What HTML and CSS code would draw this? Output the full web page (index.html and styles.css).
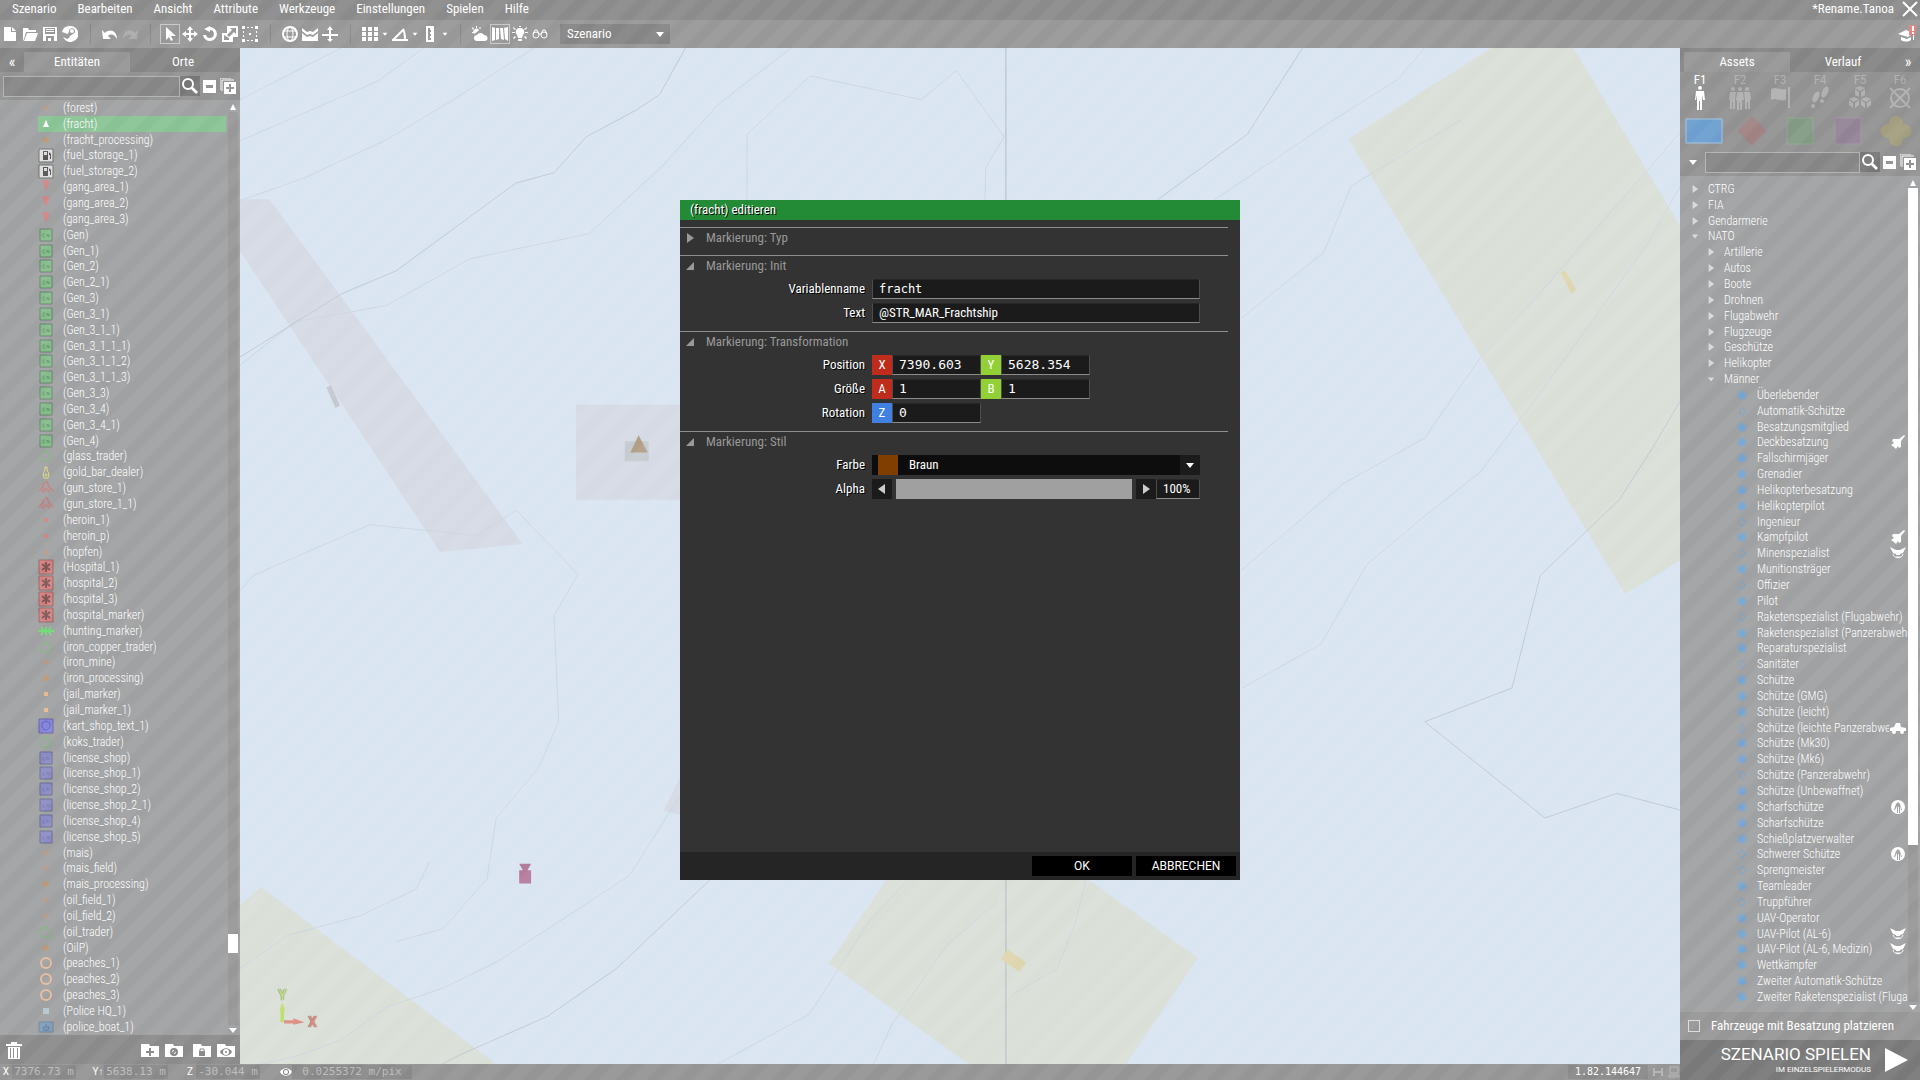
FILE: index.html
```
<!DOCTYPE html>
<html lang="de">
<head>
  <meta charset="UTF-8">
  <title>*Rename.Tanoa</title>
  <link rel="stylesheet" href="styles.css">
</head>
<body>
  <!-- shared icons -->
  <svg class="defs" aria-hidden="true">
    <symbol id="new" viewBox="0 0 16 16"><path d="M2 1h7v5h5v9H2zM10 1l4 4h-4z"/></symbol>
    <symbol id="open" viewBox="0 0 16 16"><path d="M1 15V2h5l1 2h7v2H4L2 13zM5 7h11l-3 8H2z"/></symbol>
    <symbol id="save" viewBox="0 0 16 16"><path fill-rule="evenodd" d="M1 1h14v14H1zM3 2v6h10V2zM4 10v5h2v-3h3v3h3v-5z"/><path d="M4 3h8v1H4zM4 5h8v1H4z"/></symbol>
    <symbol id="steam" viewBox="0 0 16 16"><path fill-rule="evenodd" d="M8 0a8 8 0 1 1-7 11l4 2 2-1 1-2 3-2a3 3 0 1 0-4-3L6 8 0 6a8 8 0 0 1 8-6zM10 3a2 2 0 1 1 0 4 2 2 0 0 1 0-4z"/></symbol>
    <symbol id="undo" viewBox="0 0 16 16"><path d="M0 4l1 9h8L6 10c3-3 7-1 9 3C15 5 8 2 3 7z"/></symbol>
    <symbol id="redo" viewBox="0 0 16 16"><path d="M16 4l-1 9H7l3-3C7 7 3 9 1 13 1 5 8 2 13 7z"/></symbol>
    <symbol id="cursor" viewBox="0 0 16 16"><path d="M4 1l10 9H9l2 4-2 1-2-4-3 3z"/></symbol>
    <symbol id="move" viewBox="0 0 16 16"><path d="M8 0l3 4H9v3h3V5l4 3-4 3V9H9v3h2l-3 4-3-4h2V9H4v2L0 8l4-3v2h3V4H5z"/></symbol>
    <symbol id="rotate" viewBox="0 0 16 16"><path d="M8 1a7 7 0 1 1-7 8h3a4 4 0 1 0 4-5v2L2 3l6-3z"/></symbol>
    <symbol id="scale" viewBox="0 0 16 16"><path fill-rule="evenodd" d="M5 0h11v11h-5v5H0V7h5zM8 2l2 2-5 5 2 2 5-5 2 2V2zM2 9v5h5v-2z"/></symbol>
    <symbol id="area" viewBox="0 0 16 16"><path d="M0 0h3v3H0zM13 0h3v3h-3zM0 13h3v3H0zM13 13h3v3h-3zM5 1h2v1H5zM9 1h2v1H9zM5 14h2v1H5zM9 14h2v1H9zM1 5h1v2H1zM1 9h1v2H1zM14 5h1v2h-1zM14 9h1v2h-1zM7 7h2v2H7z"/></symbol>
    <symbol id="globe" viewBox="0 0 16 16"><g fill="none" stroke="currentColor"><circle cx="8" cy="8" r="7" stroke-width="2"/><ellipse cx="8" cy="8" rx="3" ry="7"/><path d="M2 5h12M2 11h12"/></g></symbol>
    <symbol id="surface" viewBox="0 0 16 16"><path d="M0 2l5 4 3-1 3 1 5-4v3l-5 4-3-1-3 1-5-4zM0 7l5 4 3-1 3 1 5-4v8H0z"/></symbol>
    <symbol id="vertical" viewBox="0 0 16 16"><path d="M8 0l3 4H9v4h7v2H9v3h2l-3 3-3-3h2v-3H0V8h7V4H5z"/></symbol>
    <symbol id="grid" viewBox="0 0 16 16"><path d="M0 1h4v4H0zM6 1h4v4H6zM12 1h4v4h-4zM0 6h4v4H0zM6 6h4v4H6zM12 6h4v4h-4zM0 11h4v4H0zM6 11h4v4H6zM12 11h4v4h-4z"/></symbol>
    <symbol id="angle" viewBox="0 0 16 16"><path d="M1 14L12 3M0 14h16M11 4c2 2 2 6 2 10" fill="none" stroke="currentColor" stroke-width="2"/></symbol>
    <symbol id="ruler" viewBox="0 0 16 16"><path d="M5 1h6v14H5zM8 3h3M9 5h2M8 7h3M9 9h2M8 11h3M9 13h2" fill="none" stroke="currentColor" stroke-width="2"/></symbol>
    <symbol id="weather" viewBox="0 0 16 16"><path d="M5 15a3 3 0 0 1 0-6 4 4 0 0 1 7 0 3 3 0 0 1 1 6zM2 8a3 3 0 0 1 5-4l-2 2zM4 0h1v2H4zM0 2l1-1 1 2-1 1zM0 6h1v1H0zM8 1l1 1-1 1-1-1z"/></symbol>
    <symbol id="texture" viewBox="0 0 16 16"><path d="M0 1l3 1v12l-3 1zM4 2h3v11l-3 1zM8 2h3l1 12-3-1zM12 2l4-1v14l-3-2z"/></symbol>
    <symbol id="bulb" viewBox="0 0 16 16"><path d="M8 2a4 4 0 0 1 3 7l-1 3H6L5 9a4 4 0 0 1 3-7zM6 13h4v2H6zM0 6h3v1H0zM13 6h3v1h-3zM7 0h2v1H7zM1 12l2-2 1 1-2 2zM12 11l1-1 2 2-1 1zM1 1l3 2-1 1-2-2zM15 1l-3 2 1 1 2-2z"/></symbol>
    <symbol id="binoc" viewBox="0 0 16 16"><g fill="none" stroke="currentColor"><circle cx="4" cy="9" r="3"/><circle cx="12" cy="9" r="3"/><path d="M1 8l2-4h2l2 4h2l2-4h2l2 4"/></g></symbol>
    <symbol id="search" viewBox="0 0 16 16"><circle cx="6" cy="6" r="5" fill="none" stroke="currentColor" stroke-width="2"/><path d="M9 11l2-2 5 5-2 2z"/></symbol>
    <symbol id="minus" viewBox="0 0 16 16"><path fill-rule="evenodd" d="M1 2h13v13H1zM4 7v3h7V7z"/></symbol>
    <symbol id="plus" viewBox="0 0 16 16"><path fill-rule="evenodd" d="M4 4h12v12H4zM9 6v3H6v2h3v3h2v-3h3V9h-3V6z"/><path d="M2 13V2h12M0 12V0h11" fill="none" stroke="currentColor"/></symbol>
    <symbol id="up" viewBox="0 0 10 10"><path d="M5 2l3 6H2z"/></symbol>
    <symbol id="down" viewBox="0 0 10 10"><path d="M1 3h8L5 8z"/></symbol>
    <symbol id="left" viewBox="0 0 10 10"><path d="M8 0v10L1 5z"/></symbol>
    <symbol id="right" viewBox="0 0 10 10"><path d="M2 0v10l7-5z"/></symbol>
    <symbol id="corner" viewBox="0 0 10 10"><path d="M9 1v8H1z"/></symbol>
    <symbol id="close" viewBox="0 0 16 16"><path d="M1 1l14 14M15 1L1 15" stroke="currentColor" stroke-width="2"/></symbol>
    <symbol id="tutor" viewBox="0 0 18 18"><path d="M0 9l8-4 7 3-5 4zM3 12l6 2 4-2v3c-3 2-7 2-10 0zM15 9h1v6h-1z"/><path fill="#e08282" d="M11 0h7v10h-7z"/><path d="M14 1h2v5h-2zM14 7h2v2h-2z"/></symbol>
    <symbol id="trash" viewBox="0 0 16 18"><path fill-rule="evenodd" d="M0 3h5V1h6v2h5v2H0zM2 6h12v12H2zM4 7v10h1V7zM7 7v10h1V7zM11 7v10h1V7z"/></symbol>
    <symbol id="f-add" viewBox="0 0 18 16"><path fill-rule="evenodd" d="M0 2h8l1 2h9v11H0zM8 6v3H5v2h3v3h2v-3h3V9h-3V6z"/></symbol>
    <symbol id="f-off" viewBox="0 0 18 16"><path d="M0 2h8l1 2h9v11H0z"/><g fill="none" stroke="#858585" stroke-width="2"><circle cx="9" cy="10" r="3"/><path d="M7 12l4-4"/></g></symbol>
    <symbol id="f-lock" viewBox="0 0 18 16"><path d="M0 2h8l1 2h9v11H0z"/><path fill="#858585" d="M6 9h6v5H6z"/><path d="M7 9V7h4v2" fill="none" stroke="#858585"/></symbol>
    <symbol id="f-eye" viewBox="0 0 18 16"><path d="M0 2h8l1 2h9v11H0z"/><path fill="#858585" d="M3 10c3-5 9-5 12 0-3 5-9 5-12 0z"/><circle cx="9" cy="10" r="3"/><circle cx="9" cy="10" r="1" fill="#858585"/></symbol>
    <symbol id="eye" viewBox="0 0 12 12"><path d="M0 6c3-5 9-5 12 0-3 5-9 5-12 0z"/><circle cx="6" cy="6" r="3" fill="#858585"/><circle cx="6" cy="6" r="2"/></symbol>
    <symbol id="man" viewBox="0 0 24 24"><path d="M12 0a2 2 0 1 1 0 4 2 2 0 0 1 0-4zM8 5h8l1 9h-2l-1-5v15h-2v-9h-1v9H9V9l-1 5H7z"/></symbol>
    <symbol id="group" viewBox="0 0 24 24"><path d="M12 1a2 2 0 1 1 0 4 2 2 0 0 1 0-4zM9 6h6l1 8h-2v10h-2v-8h-1v8H9V14H8zM5 1a2 2 0 1 1 0 4 2 2 0 0 1 0-4zM2 6h6l-1 8v9H5v-7H4v7H2v-9H1zM19 1a2 2 0 1 1 0 4 2 2 0 0 1 0-4zM16 6h6l1 8h-1v9h-2v-7h-1v7h-2v-9z"/></symbol>
    <symbol id="flag" viewBox="0 0 24 24"><path d="M3 3c5-3 9 2 15 0v11c-6 2-10-3-15 0zM20 1h2v21h-2z"/></symbol>
    <symbol id="steps" viewBox="0 0 24 24"><ellipse cx="17" cy="6" rx="3" ry="6" transform="rotate(25 17 6)"/><ellipse cx="14" cy="15" rx="2" ry="2"/><ellipse cx="8" cy="11" rx="3" ry="6" transform="rotate(25 8 11)"/><ellipse cx="5" cy="20" rx="2" ry="2"/></symbol>
    <symbol id="cubes" viewBox="0 0 24 24"><path d="M12 0l5 2-5 3-5-3zM7 3l4 3v5L7 9zM17 3l-4 3v5l4-2zM6 11l5 2-5 3-5-3zM1 14l4 3v5l-4-3zM11 14l-4 3v5l4-3zM18 11l5 2-5 3-5-3zM13 14l4 3v5l-4-3zM23 14l-4 3v5l4-3z"/></symbol>
    <symbol id="empty" viewBox="0 0 24 24"><g fill="none" stroke="currentColor" stroke-width="2"><circle cx="12" cy="12" r="9"/><path d="M2 2l20 20M22 2L2 22"/></g></symbol>
    <symbol id="play" viewBox="0 0 24 24"><path d="M1 0v24l23-12z"/></symbol>
    <symbol id="jet" viewBox="0 0 16 16"><path d="M14 1l1 1-4 5v6l-2 1-1-2-2 3-2-2-3-2 3-2-2-2 1-2h6z"/></symbol>
    <symbol id="bird" viewBox="0 0 16 16"><path d="M0 2l6 3h4l6-3-3 6-3 1v1H6V9L3 8z"/><path d="M3 9c1 5 9 5 10 0M6 12h4" fill="none" stroke="currentColor"/></symbol>
    <symbol id="car" viewBox="0 0 16 16"><path d="M0 8l4-1 2-4h4l1 4 5 1v3H0z"/><circle cx="4" cy="12" r="2"/><circle cx="12" cy="12" r="2"/></symbol>
    <symbol id="dlc" viewBox="0 0 16 16"><path fill-rule="evenodd" d="M8 1a7 7 0 1 1 0 14A7 7 0 0 1 8 1zM8 3L6 5l-2 6h1l2-4v7h1V8h1v6h1V7l1 4h1l-2-6z"/></symbol>

    <!-- marker icons -->
    <symbol id="m-tri" viewBox="0 0 16 16"><path fill="#fff" d="M8 4l3 7H5z"/></symbol>
    <symbol id="m-brown" viewBox="0 0 16 16"><path fill="#b99b84" d="M8 4l3 6H5z"/></symbol>
    <symbol id="m-proc" viewBox="0 0 16 16"><path fill="#bb9777" d="M8 5l3 2v3l-2 1H6L5 9V6z"/></symbol>
    <symbol id="m-fuel" viewBox="0 0 16 16"><path fill="#dedede" stroke="#6e6e6e" d="M1 2h14v13H1z"/><path fill="#555" fill-rule="evenodd" d="M5 4h5v9H5zM6 5v3h3V5zM11 5l2 2v5h-1V8h-1z"/></symbol>
    <symbol id="m-gang" viewBox="0 0 16 16"><path fill="#cf8686" d="M5 1h6v5L9 8v3H7V8L5 6z"/></symbol>
    <symbol id="m-gen" viewBox="0 0 16 16"><path fill="#85bd8c" stroke="#6b806d" d="M2 2h12v12H2z"/><path fill="none" stroke="#669b6c" d="M7 7H5v3h2M9 10V7l2 3V7"/></symbol>
    <symbol id="m-trader" viewBox="0 0 16 16"><path fill="none" stroke="#86b087" stroke-width="2" stroke-dasharray="2 1" d="M8 2v3M5 4L2 8l2 5h8l2-5-3-4z"/></symbol>
    <symbol id="m-gold" viewBox="0 0 16 16"><path fill="none" stroke="#e3dd83" d="M7 3h2v3l2 4-1 4H6l-1-4 2-4z"/><circle cx="8" cy="11" r="1" fill="none" stroke="#e3dd83"/></symbol>
    <symbol id="m-gun" viewBox="0 0 16 16"><path fill="none" stroke="#bd8484" stroke-width="2" d="M7 2h2l2 5 4 4M6 3L5 7l-4 4M5 13c0-5 6-5 6 0"/></symbol>
    <symbol id="m-red" viewBox="0 0 16 16"><circle cx="8" cy="8" r="2" fill="#dc7f7f"/></symbol>
    <symbol id="m-hosp" viewBox="0 0 16 16"><path fill="#d68080" stroke="#8c6a6a" d="M1 1h14v14H1z"/><path stroke="#7d5656" stroke-width="2" d="M8 3v10M4 5l8 6M12 5l-8 6"/></symbol>
    <symbol id="m-hunt" viewBox="0 0 16 16"><path fill="none" stroke="#73dd79" stroke-width="2" d="M0 8h16M8 4v8M3 4l3 4-3 4M13 4l-3 4 3 4"/></symbol>
    <symbol id="m-jail" viewBox="0 0 16 16"><path fill="#e9b98c" d="M6 6h4v4H6z"/></symbol>
    <symbol id="m-kart" viewBox="0 0 16 16"><path fill="#8585dd" stroke="#6767a0" d="M1 1h14v14H1z"/><path fill="none" stroke="#6565bb" d="M8 3l4 2v4l-3 3H7L4 9V5z"/></symbol>
    <symbol id="m-lic" viewBox="0 0 16 16"><path fill="#8c8cc4" stroke="#6c6c93" d="M2 2h12v12H2z"/><path fill="none" stroke="#7c7cb2" d="M5 7v3h2M9 10V7l2 3V7"/></symbol>
    <symbol id="m-ring" viewBox="0 0 16 16"><circle cx="8" cy="8" r="5" fill="none" stroke="#e6bd9f" stroke-width="2"/></symbol>
    <symbol id="m-hq" viewBox="0 0 16 16"><path fill="#b7c6cf" d="M5 5h6v6H5z"/></symbol>
    <symbol id="m-boat" viewBox="0 0 16 16"><path fill="#819db8" stroke="#708599" d="M1 3h14v10H1z"/><path fill="none" stroke="#5c7fa2" d="M5 8h6l-1 3H6zM7 6h2"/></symbol>
    <symbol id="m-unit" viewBox="0 0 16 16"><circle cx="8" cy="8" r="5" fill="#74a5d2" opacity=".5"/><path fill="#6fa5d8" d="M8 5l3 3-1 3H6L5 8z"/></symbol>
    <symbol id="m-open" viewBox="0 0 16 16"><path fill="none" stroke="#76a3cc" d="M8 4l3 4-2 4H7L5 8z"/></symbol>
  </svg>

  <div class="editor">
    <header class="topbar">
      <nav class="menu">
        <button>Szenario</button><button>Bearbeiten</button><button>Ansicht</button><button>Attribute</button><button>Werkzeuge</button><button>Einstellungen</button><button>Spielen</button><button>Hilfe</button>
        <span class="mission">*Rename.Tanoa</span>
        <button class="close" aria-label="Schließen"><svg><use href="#close"/></svg></button>
      </nav>
      <div class="toolbar">
        <button aria-label="Neu"><svg><use href="#new"/></svg></button>
        <button aria-label="Öffnen"><svg><use href="#open"/></svg></button>
        <button aria-label="Speichern"><svg><use href="#save"/></svg></button>
        <button aria-label="Steam"><svg><use href="#steam"/></svg></button>
        <span class="sep"></span>
        <button aria-label="Rückgängig"><svg><use href="#undo"/></svg></button>
        <button aria-label="Wiederholen" disabled><svg><use href="#redo"/></svg></button>
        <span class="sep"></span>
        <button class="on" aria-label="Auswählen"><svg><use href="#cursor"/></svg></button>
        <button aria-label="Verschieben"><svg><use href="#move"/></svg></button>
        <button aria-label="Drehen"><svg><use href="#rotate"/></svg></button>
        <button aria-label="Skalieren"><svg><use href="#scale"/></svg></button>
        <button aria-label="Bereich"><svg><use href="#area"/></svg></button>
        <span class="sep"></span>
        <button aria-label="Koordinatenraum"><svg><use href="#globe"/></svg></button>
        <button aria-label="Oberfläche"><svg><use href="#surface"/></svg></button>
        <button aria-label="Vertikal"><svg><use href="#vertical"/></svg></button>
        <span class="sep"></span>
        <button aria-label="Raster"><svg><use href="#grid"/></svg></button>
        <button class="caret" aria-label="Rasterweite"><svg><use href="#down"/></svg></button>
        <button aria-label="Winkel"><svg><use href="#angle"/></svg></button>
        <button class="caret" aria-label="Winkelschritt"><svg><use href="#down"/></svg></button>
        <button aria-label="Größe"><svg><use href="#ruler"/></svg></button>
        <button class="caret" aria-label="Größenschritt"><svg><use href="#down"/></svg></button>
        <span class="sep"></span>
        <button aria-label="Wetter"><svg><use href="#weather"/></svg></button>
        <button class="on" aria-label="Texturen"><svg><use href="#texture"/></svg></button>
        <button aria-label="Licht"><svg><use href="#bulb"/></svg></button>
        <button aria-label="Sicht"><svg><use href="#binoc"/></svg></button>
        <div class="phase">
          <select aria-label="Phase"><option>Szenario</option></select>
          <svg><use href="#down"/></svg>
        </div>
        <button class="tutor" aria-label="Tutorials"><svg><use href="#tutor"/></svg></button>
      </div>
    </header>

    <aside class="panel left">
      <div class="tabs">
        <button class="fold">«</button><button class="tab active">Entitäten</button><button class="tab">Orte</button>
      </div>
      <div class="search">
        <input type="text" aria-label="Suche">
        <button class="find" aria-label="Suchen"><svg><use href="#search"/></svg></button>
        <button aria-label="Zuklappen"><svg><use href="#minus"/></svg></button>
        <button aria-label="Aufklappen"><svg><use href="#plus"/></svg></button>
      </div>
      <div class="scroller">
        <ul class="entities">
          <li><svg><use href="#m-brown"/></svg>(forest)</li>
          <li class="selected"><svg><use href="#m-tri"/></svg>(fracht)</li>
          <li><svg><use href="#m-proc"/></svg>(fracht_processing)</li>
          <li><svg><use href="#m-fuel"/></svg>(fuel_storage_1)</li>
          <li><svg><use href="#m-fuel"/></svg>(fuel_storage_2)</li>
          <li><svg><use href="#m-gang"/></svg>(gang_area_1)</li>
          <li><svg><use href="#m-gang"/></svg>(gang_area_2)</li>
          <li><svg><use href="#m-gang"/></svg>(gang_area_3)</li>
          <li><svg><use href="#m-gen"/></svg>(Gen)</li>
          <li><svg><use href="#m-gen"/></svg>(Gen_1)</li>
          <li><svg><use href="#m-gen"/></svg>(Gen_2)</li>
          <li><svg><use href="#m-gen"/></svg>(Gen_2_1)</li>
          <li><svg><use href="#m-gen"/></svg>(Gen_3)</li>
          <li><svg><use href="#m-gen"/></svg>(Gen_3_1)</li>
          <li><svg><use href="#m-gen"/></svg>(Gen_3_1_1)</li>
          <li><svg><use href="#m-gen"/></svg>(Gen_3_1_1_1)</li>
          <li><svg><use href="#m-gen"/></svg>(Gen_3_1_1_2)</li>
          <li><svg><use href="#m-gen"/></svg>(Gen_3_1_1_3)</li>
          <li><svg><use href="#m-gen"/></svg>(Gen_3_3)</li>
          <li><svg><use href="#m-gen"/></svg>(Gen_3_4)</li>
          <li><svg><use href="#m-gen"/></svg>(Gen_3_4_1)</li>
          <li><svg><use href="#m-gen"/></svg>(Gen_4)</li>
          <li><svg><use href="#m-trader"/></svg>(glass_trader)</li>
          <li><svg><use href="#m-gold"/></svg>(gold_bar_dealer)</li>
          <li><svg><use href="#m-gun"/></svg>(gun_store_1)</li>
          <li><svg><use href="#m-gun"/></svg>(gun_store_1_1)</li>
          <li><svg><use href="#m-red"/></svg>(heroin_1)</li>
          <li><svg><use href="#m-red"/></svg>(heroin_p)</li>
          <li><svg><use href="#m-brown"/></svg>(hopfen)</li>
          <li><svg><use href="#m-hosp"/></svg>(Hospital_1)</li>
          <li><svg><use href="#m-hosp"/></svg>(hospital_2)</li>
          <li><svg><use href="#m-hosp"/></svg>(hospital_3)</li>
          <li><svg><use href="#m-hosp"/></svg>(hospital_marker)</li>
          <li><svg><use href="#m-hunt"/></svg>(hunting_marker)</li>
          <li><svg><use href="#m-trader"/></svg>(iron_copper_trader)</li>
          <li><svg><use href="#m-brown"/></svg>(iron_mine)</li>
          <li><svg><use href="#m-proc"/></svg>(iron_processing)</li>
          <li><svg><use href="#m-jail"/></svg>(jail_marker)</li>
          <li><svg><use href="#m-jail"/></svg>(jail_marker_1)</li>
          <li><svg><use href="#m-kart"/></svg>(kart_shop_text_1)</li>
          <li><svg><use href="#m-trader"/></svg>(koks_trader)</li>
          <li><svg><use href="#m-lic"/></svg>(license_shop)</li>
          <li><svg><use href="#m-lic"/></svg>(license_shop_1)</li>
          <li><svg><use href="#m-lic"/></svg>(license_shop_2)</li>
          <li><svg><use href="#m-lic"/></svg>(license_shop_2_1)</li>
          <li><svg><use href="#m-lic"/></svg>(license_shop_4)</li>
          <li><svg><use href="#m-lic"/></svg>(license_shop_5)</li>
          <li><svg><use href="#m-brown"/></svg>(mais)</li>
          <li><svg><use href="#m-brown"/></svg>(mais_field)</li>
          <li><svg><use href="#m-proc"/></svg>(mais_processing)</li>
          <li><svg><use href="#m-brown"/></svg>(oil_field_1)</li>
          <li><svg><use href="#m-brown"/></svg>(oil_field_2)</li>
          <li><svg><use href="#m-trader"/></svg>(oil_trader)</li>
          <li><svg><use href="#m-proc"/></svg>(OilP)</li>
          <li><svg><use href="#m-ring"/></svg>(peaches_1)</li>
          <li><svg><use href="#m-ring"/></svg>(peaches_2)</li>
          <li><svg><use href="#m-ring"/></svg>(peaches_3)</li>
          <li><svg><use href="#m-hq"/></svg>(Police HQ_1)</li>
          <li><svg><use href="#m-boat"/></svg>(police_boat_1)</li>
        </ul>
        <div class="scrollbar"><svg><use href="#up"/></svg><div class="track"><div class="thumb"></div></div><svg><use href="#down"/></svg></div>
      </div>
      <div class="actions">
        <button class="trash" aria-label="Löschen"><svg><use href="#trash"/></svg></button>
        <button aria-label="Ordner hinzufügen"><svg><use href="#f-add"/></svg></button>
        <button aria-label="Ordner auflösen"><svg><use href="#f-off"/></svg></button>
        <button class="lock" aria-label="Sperren"><svg><use href="#f-lock"/></svg></button>
        <button aria-label="Sichtbarkeit"><svg><use href="#f-eye"/></svg></button>
      </div>
    </aside>

    <main class="map">
      <svg viewBox="0 12 1568 1532" preserveAspectRatio="none">
        <g class="zone">
          <path d="M1207 149L1362 12h90l116 268v505l-60 50z"/>
          <path d="M0 1305l23-28 256 267H0z"/>
          <path d="M641 1392l65-130h214l123 122-78 160H793z"/>
        </g>
        <g class="road">
          <path d="M0 240h32l276 520-90 12L0 318zM366 550h120v143H366zM479 1112v56l-18-6z"/>
        </g>
        <g class="minor">
          <path d="M200 12L150 62 0 152M320 12L230 92 160 150 70 208 0 242M600 12L520 98 460 190 380 292 250 330 160 400 60 425 0 490"/>
          <path d="M552 240v-98l69-88 121 36 38-44 52 100-20 46-1 70M0 830l15-23 126-76 117 16 43-38 67 97-26 62 5 160-22 70-46 75-10 92-48 75-52 20"/>
          <path d="M479 1140l-55 120-144 130-60 40-60 28-50 50-50 25-60 18M0 1400l52-50 80-30 60-40 14-40M520 1544l100-75 65-140 40-60M690 1544l20-60 60-120 55-65M840 1440l50-40 20-70 12-70"/>
          <path d="M1060 242L1180 130 1260 60 1290 12M1090 800l110-130 90-70 60-120 60-90 158-250M1090 978l87-67 50-120 60-70 64-70 60-110 120-230 37-90"/>
          <path d="M110 12L0 90M1090 420l90-100 30-100 120-100"/>
        </g>
        <g class="major">
          <path d="M485 12l-28 70-26 24-54 40-35 54-42 16-130 132-60 35L0 478M1157 12l-60 130-97 98M1568 545l-30 70-36 78-86 114-31 170-95 51 131 145 78-37 69 25M515 1262L410 1400 335 1472 240 1530 220 1544"/>
        </g>
        <path class="meridian" d="M834 12v1532"/>
        <path fill="#ddd6af" d="M836 1371l20 20-7 14-21-19zM1438 350l5-2 12 29-5 5z"/>
        <path fill="#c5c8cf" d="M94 524l5-3 10 30-5 4z"/>
        <path fill="#c5cbd0" d="M419 605h26v30h-26z"/>
        <path fill="#b39f88" d="M434 596l10 26h-19z"/>
        <path fill="#b57b9b" d="M304 1242h13l-4 10h4v20h-13v-20h4z"/>
        <path fill="#bfe06f" d="M44 1481v-18h-1l3-12 3 12h-1v18z"/>
        <path fill="#dc8d80" d="M48 1478h10v-3l12 6-12 4v-2H48z"/>
      </svg>
      <span class="axis axis-y">Y</span><span class="axis axis-x">X</span>
    </main>

    <aside class="panel right">
      <div class="tabs">
        <button class="tab active">Assets</button><button class="tab">Verlauf</button><button class="fold">»</button>
      </div>
      <div class="modes">
        <button class="active">F1<svg><use href="#man"/></svg></button>
        <button>F2<svg><use href="#group"/></svg></button>
        <button>F3<svg><use href="#flag"/></svg></button>
        <button>F4<svg><use href="#steps"/></svg></button>
        <button>F5<svg><use href="#cubes"/></svg></button>
        <button>F6<svg><use href="#empty"/></svg></button>
      </div>
      <div class="sides">
        <button aria-label="BLUFOR"><svg viewBox="0 0 40 32"><path fill="#6c9fcf" stroke="#a3c3e0" d="M2 4h36v24H2z"/></svg></button>
        <button aria-label="OPFOR"><svg viewBox="0 0 40 32"><path fill="#a08283" d="M20 1l15 15-15 15L5 16z"/></svg></button>
        <button aria-label="Unabhängig"><svg viewBox="0 0 40 32"><path fill="#829a83" stroke="#8fa590" d="M7 3h26v26H7z"/></svg></button>
        <button aria-label="Zivilisten"><svg viewBox="0 0 40 32"><path fill="#928496" stroke="#a092a5" d="M7 3h26v26H7z"/></svg></button>
        <button aria-label="Leer"><svg viewBox="0 0 40 32"><path fill="#a39e7e" d="M13 9c0-11 14-11 14 0 11 0 11 14 0 14 0 11-14 11-14 0-11 0-11-14 0-14z"/></svg></button>
      </div>
      <div class="search">
        <button class="more" aria-label="Filter"><svg><use href="#down"/></svg></button>
        <input type="text" aria-label="Suche">
        <button class="find" aria-label="Suchen"><svg><use href="#search"/></svg></button>
        <button aria-label="Zuklappen"><svg><use href="#minus"/></svg></button>
        <button aria-label="Aufklappen"><svg><use href="#plus"/></svg></button>
      </div>
      <div class="scroller">
        <ul class="assets">
          <li><svg class="arrow"><use href="#right"/></svg>CTRG</li>
          <li><svg class="arrow"><use href="#right"/></svg>FIA</li>
          <li><svg class="arrow"><use href="#right"/></svg>Gendarmerie</li>
          <li><svg class="arrow"><use href="#down"/></svg>NATO</li>
          <li class="sub"><svg class="arrow"><use href="#right"/></svg>Artillerie</li>
          <li class="sub"><svg class="arrow"><use href="#right"/></svg>Autos</li>
          <li class="sub"><svg class="arrow"><use href="#right"/></svg>Boote</li>
          <li class="sub"><svg class="arrow"><use href="#right"/></svg>Drohnen</li>
          <li class="sub"><svg class="arrow"><use href="#right"/></svg>Flugabwehr</li>
          <li class="sub"><svg class="arrow"><use href="#right"/></svg>Flugzeuge</li>
          <li class="sub"><svg class="arrow"><use href="#right"/></svg>Geschütze</li>
          <li class="sub"><svg class="arrow"><use href="#right"/></svg>Helikopter</li>
          <li class="sub"><svg class="arrow"><use href="#down"/></svg>Männer</li>
          <li class="unit"><svg><use href="#m-unit"/></svg><span>Überlebender</span></li>
          <li class="unit"><svg><use href="#m-open"/></svg><span>Automatik-Schütze</span></li>
          <li class="unit"><svg><use href="#m-unit"/></svg><span>Besatzungsmitglied</span></li>
          <li class="unit"><svg><use href="#m-unit"/></svg><span>Deckbesatzung</span><svg><use href="#jet"/></svg></li>
          <li class="unit"><svg><use href="#m-unit"/></svg><span>Fallschirmjäger</span></li>
          <li class="unit"><svg><use href="#m-unit"/></svg><span>Grenadier</span></li>
          <li class="unit"><svg><use href="#m-unit"/></svg><span>Helikopterbesatzung</span></li>
          <li class="unit"><svg><use href="#m-unit"/></svg><span>Helikopterpilot</span></li>
          <li class="unit"><svg><use href="#m-open"/></svg><span>Ingenieur</span></li>
          <li class="unit"><svg><use href="#m-unit"/></svg><span>Kampfpilot</span><svg><use href="#jet"/></svg></li>
          <li class="unit"><svg><use href="#m-open"/></svg><span>Minenspezialist</span><svg><use href="#bird"/></svg></li>
          <li class="unit"><svg><use href="#m-unit"/></svg><span>Munitionsträger</span></li>
          <li class="unit"><svg><use href="#m-open"/></svg><span>Offizier</span></li>
          <li class="unit"><svg><use href="#m-unit"/></svg><span>Pilot</span></li>
          <li class="unit"><svg><use href="#m-open"/></svg><span>Raketenspezialist (Flugabwehr)</span></li>
          <li class="unit"><svg><use href="#m-unit"/></svg><span>Raketenspezialist (Panzerabwehr</span></li>
          <li class="unit"><svg><use href="#m-unit"/></svg><span>Reparaturspezialist</span></li>
          <li class="unit"><svg><use href="#m-open"/></svg><span>Sanitäter</span></li>
          <li class="unit"><svg><use href="#m-unit"/></svg><span>Schütze</span></li>
          <li class="unit"><svg><use href="#m-unit"/></svg><span>Schütze (GMG)</span></li>
          <li class="unit"><svg><use href="#m-unit"/></svg><span>Schütze (leicht)</span></li>
          <li class="unit"><svg><use href="#m-open"/></svg><span>Schütze (leichte Panzerabwe</span><svg><use href="#car"/></svg></li>
          <li class="unit"><svg><use href="#m-unit"/></svg><span>Schütze (Mk30)</span></li>
          <li class="unit"><svg><use href="#m-unit"/></svg><span>Schütze (Mk6)</span></li>
          <li class="unit"><svg><use href="#m-open"/></svg><span>Schütze (Panzerabwehr)</span></li>
          <li class="unit"><svg><use href="#m-unit"/></svg><span>Schütze (Unbewaffnet)</span></li>
          <li class="unit"><svg><use href="#m-unit"/></svg><span>Scharfschütze</span><svg><use href="#dlc"/></svg></li>
          <li class="unit"><svg><use href="#m-unit"/></svg><span>Scharfschütze</span></li>
          <li class="unit"><svg><use href="#m-unit"/></svg><span>Schießplatzverwalter</span></li>
          <li class="unit"><svg><use href="#m-open"/></svg><span>Schwerer Schütze</span><svg><use href="#dlc"/></svg></li>
          <li class="unit"><svg><use href="#m-open"/></svg><span>Sprengmeister</span></li>
          <li class="unit"><svg><use href="#m-unit"/></svg><span>Teamleader</span></li>
          <li class="unit"><svg><use href="#m-open"/></svg><span>Truppführer</span></li>
          <li class="unit"><svg><use href="#m-unit"/></svg><span>UAV-Operator</span></li>
          <li class="unit"><svg><use href="#m-unit"/></svg><span>UAV-Pilot (AL-6)</span><svg><use href="#bird"/></svg></li>
          <li class="unit"><svg><use href="#m-unit"/></svg><span>UAV-Pilot (AL-6, Medizin)</span><svg><use href="#bird"/></svg></li>
          <li class="unit"><svg><use href="#m-unit"/></svg><span>Wettkämpfer</span></li>
          <li class="unit"><svg><use href="#m-unit"/></svg><span>Zweiter Automatik-Schütze</span></li>
          <li class="unit"><svg><use href="#m-unit"/></svg><span>Zweiter Raketenspezialist (Flugab</span></li>
        </ul>
        <div class="scrollbar"><svg><use href="#up"/></svg><div class="track"><div class="thumb"></div></div><svg><use href="#down"/></svg></div>
      </div>
      <label class="crew"><input type="checkbox"> Fahrzeuge mit Besatzung platzieren</label>
      <button class="start"><span>SZENARIO SPIELEN<small>IM EINZELSPIELERMODUS</small></span><svg><use href="#play"/></svg></button>
    </aside>

    <footer class="status">
      <b>X</b><span>7376.73 m</span>
      <b>Y↑</b><span>5638.13 m</span>
      <b>Z</b><span>-30.044 m</span>
      <svg><use href="#eye"/></svg><span class="zoom">0.0255372 m/pix</span>
      <span class="version">1.82.144647</span>
      <svg class="dim" viewBox="0 0 12 12"><path d="M1 2h2v8H1zM9 2h2v8H9zM3 5h6v2H3z"/></svg>
      <svg class="dim" viewBox="0 0 12 12"><path d="M2 1h8v6H2zM1 9h10v2H1z" fill="none" stroke="currentColor"/></svg>
    </footer>
  </div>

  <div class="overlay">
    <form class="dialog" role="dialog" aria-labelledby="title">
      <h1 id="title">(fracht) editieren</h1>
      <div class="body">
        <section>
          <h2><svg><use href="#right"/></svg>Markierung: Typ</h2>
        </section>
        <section>
          <h2><svg><use href="#corner"/></svg>Markierung: Init</h2>
          <div class="row"><label for="name">Variablenname</label><input class="wide mono" id="name" type="text" value="fracht"></div>
          <div class="row"><label for="text">Text</label><input class="wide" id="text" type="text" value="@STR_MAR_Frachtship"></div>
        </section>
        <section>
          <h2><svg><use href="#corner"/></svg>Markierung: Transformation</h2>
          <div class="row"><span class="name">Position</span><label class="tag red" for="px">X</label><input class="num" id="px" type="text" value="7390.603"><label class="tag green" for="py">Y</label><input class="num" id="py" type="text" value="5628.354"></div>
          <div class="row"><span class="name">Größe</span><label class="tag red" for="sa">A</label><input class="num" id="sa" type="text" value="1"><label class="tag green" for="sb">B</label><input class="num" id="sb" type="text" value="1"></div>
          <div class="row"><span class="name">Rotation</span><label class="tag blue" for="rz">Z</label><input class="num" id="rz" type="text" value="0"></div>
        </section>
        <section>
          <h2><svg><use href="#corner"/></svg>Markierung: Stil</h2>
          <div class="row"><label for="color">Farbe</label>
            <div class="color"><i></i><select id="color"><option>Braun</option></select><svg><use href="#down"/></svg></div>
          </div>
          <div class="row"><label for="alpha">Alpha</label>
            <div class="slider">
              <button type="button" aria-label="Weniger"><svg><use href="#left"/></svg></button>
              <input id="alpha" type="range" value="100">
              <button type="button" aria-label="Mehr"><svg><use href="#right"/></svg></button>
              <input class="percent" type="text" value="100%" aria-label="Alpha in Prozent">
            </div>
          </div>
        </section>
      </div>
      <div class="buttons"><button type="button">OK</button><button type="button">ABBRECHEN</button></div>
    </form>
  </div>
</body>
</html>
```
FILE: styles.css
```
* { box-sizing: border-box; }
body { margin: 0; font: 13px/16px "Roboto Condensed", "Liberation Sans Narrow", Roboto, sans-serif; color: #fff; overflow: hidden; }
button, input, select { font: inherit; color: inherit; border: 0; border-radius: 0; padding: 0; margin: 0; background: none; outline: 0; }
select { appearance: none; }
ul { list-style: none; margin: 0; padding: 0; }
svg { fill: currentColor; width: 16px; height: 16px; flex: none; display: block; }
.defs { position: absolute; width: 0; height: 0; }

.editor {
  display: grid;
  height: 100vh;
  grid-template: "top top top" 48px "left map right" 1fr "status status right" 16px / 240px 1fr 240px;
}

/* menu and toolbar */
.topbar { grid-area: top; background: #989898; }
.menu { display: flex; align-items: center; gap: 21px; height: 20px; padding: 0 2px 2px 12px; background: #8b8b8b; }
.mission { margin-left: auto; }
.close { margin-left: -13px; }
.toolbar { display: flex; align-items: center; height: 28px; }
.toolbar button { width: 20px; height: 20px; display: flex; align-items: center; justify-content: center; }
.toolbar button:disabled { opacity: .2; }
.toolbar .on { border: 1px solid #c8c8c8; }
.toolbar .caret { width: 10px; }
.toolbar .caret svg { width: 6px; height: 6px; }
.sep { width: 1px; height: 20px; margin: 0 9px 0 10px; background: #868686; }
.phase { display: flex; align-items: center; width: 110px; height: 20px; margin-left: 10px; padding-right: 5px; background: #858585; }
.phase select { flex: 1; padding-left: 7px; }
.phase svg { width: 10px; height: 10px; }
.toolbar .tutor { margin: 0 3px 0 auto; }
.tutor svg { width: 18px; height: 18px; }

/* side panels */
.panel { display: flex; flex-direction: column; min-height: 0; background: #929292; }
.left { grid-area: left; }
.right { grid-area: right; }
.tabs { display: flex; height: 24px; padding: 4px 4px 0 0; background: #858585; }
.right .tabs { padding: 4px 0 0 4px; }
.tab { flex: 1; }
.tab.active { background: #969696; }
.fold { width: 24px; font-size: 16px; }
.search { display: flex; align-items: center; gap: 2px; height: 28px; padding: 0 4px 0 3px; }
.right .search { height: 25px; padding-bottom: 3px; }
.search input { flex: 1; min-width: 0; height: 21px; background: #868686; border: 1px solid #b2b2b2; }
.search .find { width: 20px; height: 20px; margin-left: -2px; padding: 2px; background: #777; }
.search .more { width: 20px; padding: 5px; }
.search .more svg { width: 10px; height: 10px; }
.scroller { display: flex; flex: 1; min-height: 0; font-size: 12px; font-weight: 300; background: #a0a1a2; }
.entities, .assets { flex: 1; min-width: 0; display: flex; flex-direction: column; overflow: hidden; }
.entities li { flex: 1; min-height: 0; display: flex; align-items: center; gap: 9px; margin: 0 2px 0 38px; }
.selected { background: #89c395; }
.scrollbar { display: flex; flex-direction: column; align-items: center; width: 12px; padding: 2px 2px 0 0; }
.scrollbar svg { width: 10px; height: 10px; }
.track { flex: 1; width: 10px; display: grid; background: #989898; }
.thumb { grid-row: 2; background: #fff; }
.left .track { grid-template-rows: 23fr 19px 2fr; }
.right .track { grid-template-rows: 0 21fr 5fr; }
.actions { display: flex; align-items: center; gap: 6px; height: 29px; padding: 0 5px; background: #8b8b8b; }
.actions svg { width: 18px; height: 16px; }
.actions .trash { margin-right: auto; }
.trash svg { height: 18px; }
.lock { margin-left: 4px; }

.modes { display: flex; height: 39px; }
.modes button { flex: 1; color: #b0b0b0; line-height: 13px; }
.modes .active { color: #fff; }
.modes svg { width: 24px; height: 24px; margin: 0 auto; }
.sides { display: flex; height: 40px; align-items: center; }
.sides button { flex: 1; }
.sides svg { width: 40px; height: 32px; margin: 0 auto; }
.assets { padding: 5px 0 7px; }
.assets li { flex: 1; min-height: 0; display: flex; align-items: center; gap: 9px; padding-left: 11px; white-space: nowrap; }
.assets .sub { padding-left: 27px; }
.assets .unit { padding-left: 54px; gap: 7px; }
.unit span { flex: 1; min-width: 0; overflow: hidden; }
.unit span + svg { margin: 0 2px 0 -6px; }
.arrow { width: 8px; height: 8px; opacity: .6; }
.crew { display: flex; align-items: center; gap: 11px; height: 28px; padding-left: 8px; background: #979797; }
.crew input { appearance: none; width: 12px; height: 12px; border: 1px solid #ddd; }
.start { display: flex; align-items: center; justify-content: flex-end; gap: 13px; height: 40px; padding-right: 12px; background: #797979; font: 17px/20px Roboto, sans-serif; text-align: right; }
.start small { display: block; font-size: 8px; line-height: 12px; }
.start svg { width: 24px; height: 24px; }

/* map */
.map { grid-area: map; position: relative; min-height: 0; overflow: hidden; background: #dae5f2; }
.map > svg { width: 100%; height: 100%; fill: none; }
.map path { vector-effect: non-scaling-stroke; }
.zone { fill: #dadfd8; }
.road { fill: #d5dae5; }
.minor { stroke: #ced7e0; }
.major { stroke: #c0cad3; }
.meridian { stroke: #b3bcc2; }
.axis { position: absolute; font: bold 14px/14px Roboto, sans-serif; text-shadow: 0 0 1px #444; }
.axis-y { left: 38px; bottom: 62px; color: #bfe07f; }
.axis-x { left: 68px; bottom: 35px; color: #dc8d80; }

.status { grid-area: status; display: flex; align-items: center; background: #959595; font: 11px/14px "DejaVu Sans Mono", monospace; color: #bcbcbc; }
.status b { width: 12px; color: #fff; font: 10px/12px Roboto, sans-serif; text-align: center; }
.status b:not(:first-child) { margin-left: 16px; }
.status span { width: 64px; text-align: center; background: #898989; }
.status .zoom { width: 120px; }
.status svg { width: 12px; height: 12px; margin-left: 20px; color: #fff; }
.status .version { width: 80px; margin-left: auto; color: #fff; font-size: 10px; }
.status .dim { margin-left: 4px; color: #b5b5b5; }

/* diagonal veil over the blocked editor */
.overlay {
  position: absolute; inset: 0;
  display: flex; align-items: center; justify-content: center;
  background: repeating-linear-gradient(135deg, rgba(255, 255, 255, .05) 0 9px, rgba(255, 255, 255, 0) 12px 19px, rgba(255, 255, 255, .05) 22px);
}

/* attribute dialog */
.dialog { display: flex; flex-direction: column; width: 560px; min-height: 63vh; background: #333; text-shadow: 1px 1px #000; }
.dialog h1 { margin: 0; padding: 0 10px; font: inherit; line-height: 20px; background: #238b36; }
.body { flex: 1; padding: 7px 12px 0 0; }
section { border-top: 1px solid #8f8f8f; padding-bottom: 4px; }
h2 { display: flex; align-items: center; gap: 11px; height: 23px; margin: 0; padding: 0 0 2px 5px; font: inherit; color: #999; text-shadow: none; }
h2 svg { width: 10px; height: 10px; }
.row { display: flex; height: 20px; margin-bottom: 4px; line-height: 20px; }
.row > :first-child { width: 185px; margin-right: 7px; text-align: right; }
.row input[type="text"] { height: 20px; padding: 0 6px; background: #1b1b1b; border: 1px solid #4e4e4e; border-bottom-color: #8c8c8c; border-top-color: #262626; text-shadow: none; }
.row .wide { width: 328px; border-color: #262626 #5c5c5c #6c6c6c; }
.row .mono { font: 12px "DejaVu Sans Mono", monospace; }
.row .num { width: 89px; font: 13px "DejaVu Sans Mono", monospace; }
.tag { width: 20px; text-align: center; text-shadow: none; }
.red { background: #bf2c1c; }
.green { background: #92d036; }
.blue { background: #3f80e0; }
.color { position: relative; display: flex; align-items: center; width: 328px; background: #0d0d0d; }
.color i { position: absolute; left: 6px; width: 20px; height: 20px; background: #803f00; }
.color select { flex: 1; height: 20px; padding-left: 37px; }
.color svg { width: 20px; height: 20px; padding: 5px; background: #1b1b1b; }
.slider { display: flex; width: 328px; }
.slider button { width: 20px; padding: 5px; background: #1b1b1b; color: #ccc; }
.slider svg { width: 10px; height: 10px; }
.slider [type="range"] { appearance: none; flex: 1; min-width: 0; height: 20px; margin: 0 4px; background: #a0a0a0; }
.slider [type="range"]::-webkit-slider-thumb { appearance: none; width: 1px; height: 20px; }
.slider .percent { width: 44px; }
.buttons { display: flex; justify-content: flex-end; gap: 4px; padding: 4px; background: #252525; }
.buttons button { width: 100px; height: 20px; background: #000; font: 12px Roboto, sans-serif; }
```
